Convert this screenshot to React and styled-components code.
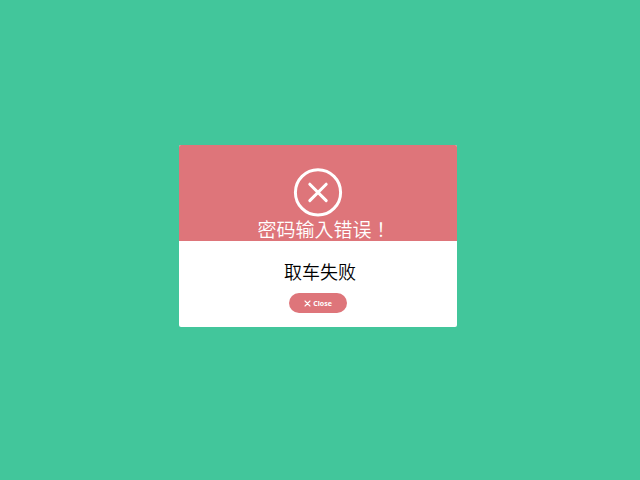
import React from "react";
import styled, { createGlobalStyle } from "styled-components";

const GlobalStyle = createGlobalStyle`
  * { box-sizing: border-box; }
  body { margin: 0; background: #42c69b; font-family: "Noto Sans CJK SC", sans-serif; }
`;

const Page = styled.main`
  min-height: 100vh;
  display: flex;
  align-items: center;
  justify-content: center;
  padding: 0 4px 8px 0;
`;

const Dialog = styled.section`
  width: 278px;
  max-width: 100%;
  border-radius: 2px;
  overflow: hidden;
  background: #fff;
  text-align: center;
`;

const Banner = styled.header`
  display: flex;
  flex-direction: column;
  align-items: center;
  padding-top: 22px;
  background: #de757a;
  color: #fff;
`;

const StatusIcon = styled.svg`
  width: 50px;
  height: 50px;
  fill: none;
  stroke: currentColor;
  stroke-width: 3;
`;

const Title = styled.h1`
  margin: 0;
  padding-left: 12px;
  font-family: "Noto Sans CJK TC", "Noto Sans CJK SC", sans-serif;
  font-size: 19px;
  line-height: 24px;
  font-weight: 350;
`;

const Body = styled.div`
  display: flex;
  flex-direction: column;
  align-items: center;
  gap: 8px;
  padding: 16px 0 14px;
`;

const Message = styled.p`
  margin: 0;
  padding-left: 4px;
  font-size: 18px;
  line-height: 28px;
  font-weight: 350;
  color: #000;
`;

const CloseButton = styled.button`
  display: flex;
  align-items: center;
  justify-content: center;
  gap: 2px;
  width: 58px;
  height: 20px;
  padding: 0;
  border: 0;
  border-radius: 10px;
  background: #de757a;
  color: #fff;
  font: 700 7px "Noto Sans", sans-serif;
  cursor: pointer;
`;

const CloseIcon = styled.svg`
  width: 7px;
  height: 7px;
  fill: none;
  stroke: currentColor;
`;

export default function App() {
  return (
    <Page>
      <GlobalStyle />
      <Dialog role="alertdialog" aria-labelledby="title" aria-describedby="message">
        <Banner>
          <StatusIcon viewBox="0 0 50 50" aria-hidden="true">
            <circle cx="25" cy="25.4" r="22.6" />
            <path d="M16.8 17.2l16.4 16.4M33.2 17.2L16.8 33.6" strokeLinecap="round" />
          </StatusIcon>
          <Title id="title">密码输入错误！</Title>
        </Banner>
        <Body>
          <Message id="message">取车失败</Message>
          <CloseButton type="button">
            <CloseIcon viewBox="0 0 7 7" aria-hidden="true">
              <path d="M1 1l5 5M6 1l-5 5" strokeLinecap="round" strokeWidth="1.1" />
            </CloseIcon>
            Close
          </CloseButton>
        </Body>
      </Dialog>
    </Page>
  );
}
